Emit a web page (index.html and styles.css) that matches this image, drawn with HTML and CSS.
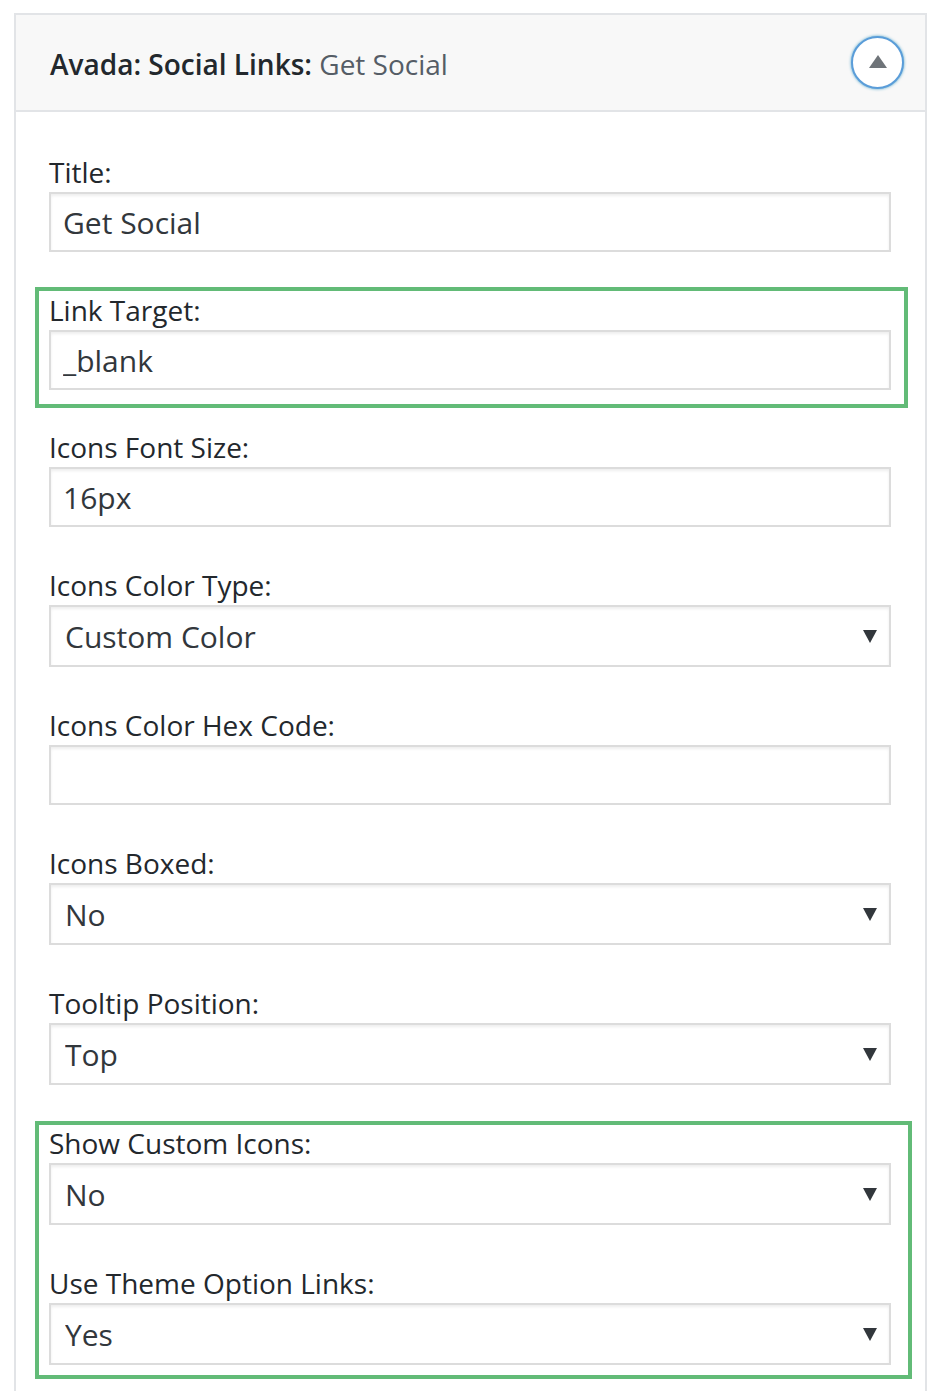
FILE: index.html
```html
<!DOCTYPE html>
<html>
<head>
  <title>Widget - Social Links</title>
  <link rel="stylesheet" href="styles.css">
</head>
<body>
  <div class="widget">
    <div class="widget-top">
      <h3 class="widget-title">Avada: Social Links<span class="sep">:</span> <span class="in-title">Get Social</span></h3>
      <button class="widget-toggle" type="button" aria-label="Collapse"></button>
    </div>

    <div class="widget-inside">
      <div class="field">
        <label for="title">Title:</label>
        <input type="text" id="title" value="Get Social">
      </div>

      <div class="highlight first">
        <div class="field">
          <label for="target">Link Target:</label>
          <input type="text" id="target" value="_blank">
        </div>
      </div>

      <div class="field">
        <label for="font-size">Icons Font Size:</label>
        <input type="text" id="font-size" value="16px">
      </div>

      <div class="field">
        <label for="color-type">Icons Color Type:</label>
        <div class="select-wrap">
          <select id="color-type">
            <option>Custom Color</option>
            <option>Brand Colors</option>
          </select>
        </div>
      </div>

      <div class="field">
        <label for="color-hex">Icons Color Hex Code:</label>
        <input type="text" id="color-hex" value="">
      </div>

      <div class="field">
        <label for="boxed">Icons Boxed:</label>
        <div class="select-wrap">
          <select id="boxed">
            <option>No</option>
            <option>Yes</option>
          </select>
        </div>
      </div>

      <div class="field">
        <label for="tooltip">Tooltip Position:</label>
        <div class="select-wrap">
          <select id="tooltip">
            <option>Top</option>
            <option>Right</option>
            <option>Bottom</option>
            <option>Left</option>
          </select>
        </div>
      </div>

      <div class="highlight second">
        <div class="field">
          <label for="custom-icons">Show Custom Icons:</label>
          <div class="select-wrap">
            <select id="custom-icons">
              <option>No</option>
              <option>Yes</option>
            </select>
          </div>
        </div>

        <div class="field">
          <label for="theme-links">Use Theme Option Links:</label>
          <div class="select-wrap">
            <select id="theme-links">
              <option>Yes</option>
              <option>No</option>
            </select>
          </div>
        </div>
      </div>
    </div>
  </div>
</body>
</html>
```

FILE: styles.css
```css
/* Widget edit form */
body {
  margin: 0;
  padding: 0;
  background-color: #fff;
  font-family: "Open Sans", "Noto Sans", sans-serif;
  color: #23282d;
}

.widget {
  box-sizing: border-box;
  width: 913px;
  margin: 13px 0 0 14px;
  border: 2px solid #e2e4e7;
  border-bottom: none;
  background-color: #fff;
}

/* header bar */
.widget-top {
  display: flex;
  align-items: center;
  justify-content: space-between;
  height: 95px;
  padding: 0 21px 0 34px;
  background-color: #f8f8f8;
  border-bottom: 2px solid #e2e4e7;
}

.widget-title {
  margin: 2px 0 0 0;
  font-size: 28px;
  font-weight: 600;
  color: #23282d;
}

.widget-title .in-title {
  font-weight: 400;
  color: #555d66;
}

.widget-toggle {
  position: relative;
  width: 53px;
  height: 53px;
  padding: 0;
  border: 2px solid #5b9dd9;
  border-radius: 50%;
  background-color: #fff;
  box-shadow: 0 0 3px rgba(30, 140, 190, 0.8);
  cursor: pointer;
}

.widget-toggle::after {
  content: "";
  position: absolute;
  left: 50%;
  top: 50%;
  margin: -8px 0 0 -9px;
  border-left: 9px solid transparent;
  border-right: 9px solid transparent;
  border-bottom: 13px solid #6f7479;
}

/* form body */
.widget-inside {
  padding: 43px 34px 40px 33px;
}

.field {
  margin-bottom: 41px;
}

.field label {
  display: block;
  font-size: 28px;
  line-height: 34px;
  margin-bottom: 3px;
  color: #23282d;
}

.field input,
.field select {
  display: block;
  box-sizing: border-box;
  width: 100%;
  margin: 0;
  border: 2px solid #dcdcdc;
  border-radius: 0;
  background-color: #fff;
  box-shadow: inset 0 2px 3px rgba(0, 0, 0, 0.07);
  font-family: inherit;
  font-size: 30px;
  color: #32373c;
  outline: none;
}

.field input {
  height: 60px;
  padding: 0 12px;
}

.field select {
  height: 62px;
  padding: 0 40px 0 14px;
  -webkit-appearance: none;
  appearance: none;
}

.select-wrap {
  position: relative;
}

/* dropdown arrow */
.select-wrap::after {
  content: "";
  position: absolute;
  right: 14px;
  top: 50%;
  margin-top: -6px;
  border-left: 7px solid transparent;
  border-right: 7px solid transparent;
  border-top: 13px solid #32373c;
  pointer-events: none;
}

/* green boxes around the link options */
.highlight {
  border: 4px solid #62bb77;
  margin: -6px -17px 22px -14px;
  padding: 2px 13px 14px 10px;
}

.highlight.second {
  margin: -5px -21px 0 -14px;
  padding: 1px 17px 10px 10px;
}

.highlight .field:last-child {
  margin-bottom: 0;
}
```
